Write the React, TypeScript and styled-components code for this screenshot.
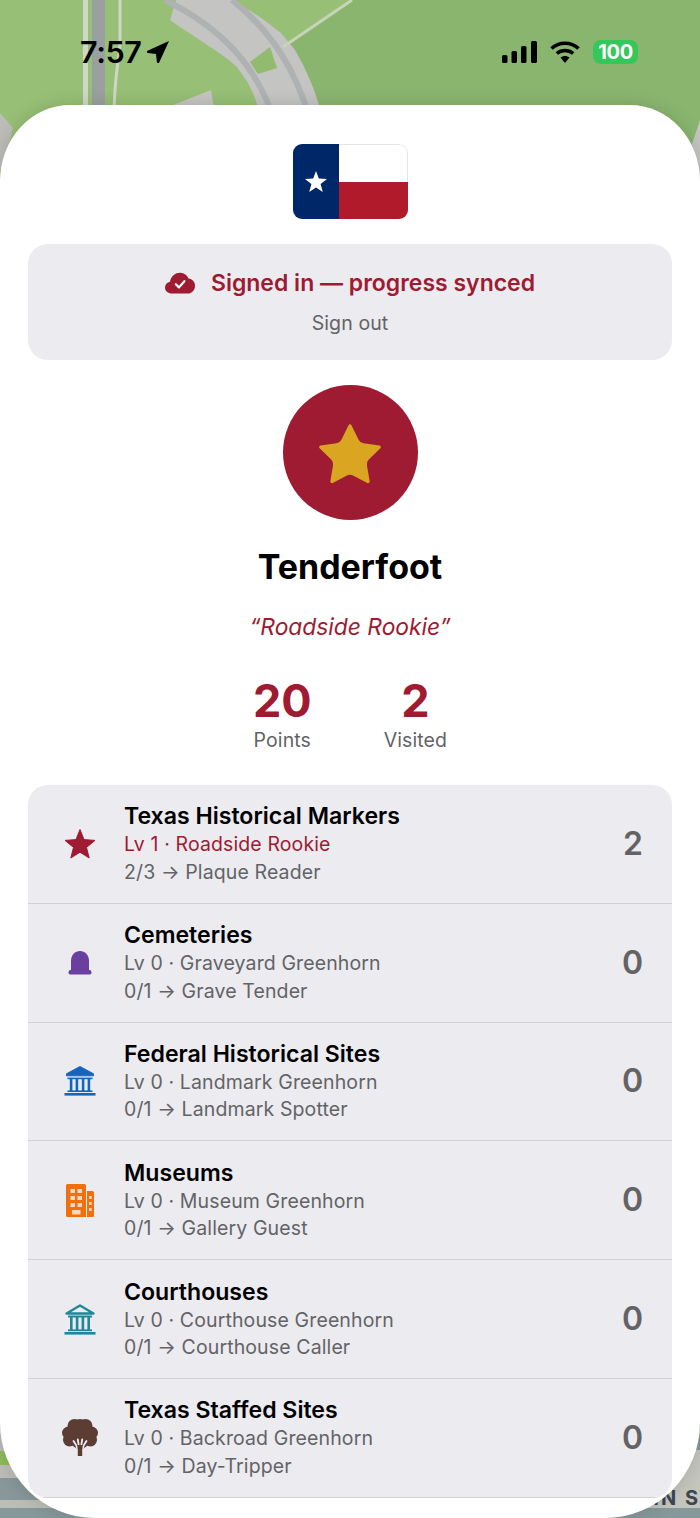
import React from "react";
import styled, { createGlobalStyle } from "styled-components";

const Global = createGlobalStyle`
  html, body { margin: 0; padding: 0; background: #8ab56f; }
  body { font-family: Inter, "Noto Sans", "Liberation Sans", sans-serif; -webkit-font-smoothing: antialiased; }
`;

const CRIMSON = "#9e1b32";
const GREY = "#636366";

const Screen = styled.div`
  position: relative;
  width: 700px;
  height: 1518px;
  overflow: hidden;
  display: flex;
  flex-direction: column;
`;
const MapArt = styled.svg`
  position: absolute;
  inset: 0;
  width: 700px;
  height: 1518px;
`;
const MapLabel = styled.span`
  position: absolute;
  right: 0;
  top: 1486px;
  font-size: 20px;
  font-weight: 700;
  letter-spacing: 2px;
  color: #3c4650;
  font-family: Inter, sans-serif;
`;
const StatusBar = styled.header`
  position: relative;
  height: 105px;
  flex: none;
  box-sizing: border-box;
  padding: 37px 62px 0 80px;
  display: flex;
  justify-content: space-between;
  align-items: flex-start;
`;
const TimeGroup = styled.div`
  display: flex;
  align-items: center;
  gap: 5px;
  height: 30px;
`;
const Time = styled.span`
  font-size: 30.5px;
  line-height: 30px;
  font-weight: 600;
  letter-spacing: -0.4px;
  color: #000;
`;
const Indicators = styled.div`
  display: flex;
  align-items: center;
  gap: 13px;
  height: 30px;
`;
const Battery = styled.span`
  width: 45px;
  height: 24px;
  border-radius: 8px;
  background: #34c759;
  color: #fff;
  font-size: 20px;
  font-weight: 700;
  line-height: 24px;
  text-align: center;
  letter-spacing: -0.3px;
`;
const Sheet = styled.main`
  position: relative;
  flex: 1;
  background: #fff;
  border-radius: 70px 70px 95px 95px / 76px 76px 95px 95px;
  box-shadow: 0 0 18px rgba(0, 0, 0, 0.14);
  padding: 39px 28px 0;
  overflow: hidden;
  display: flex;
  flex-direction: column;
  align-items: center;
  box-sizing: border-box;
`;
const Flag = styled.div`
  width: 115px;
  height: 75px;
  border-radius: 9px;
  overflow: hidden;
  display: flex;
  flex: none;
`;
const FlagHoist = styled.div`
  width: 46px;
  background: #002868;
  display: flex;
  align-items: center;
  justify-content: center;
`;
const FlagFly = styled.div`
  flex: 1;
  display: flex;
  flex-direction: column;
`;
const FlagWhite = styled.div`
  height: 38px;
  box-sizing: border-box;
  background: #fff;
  border: 1px solid #e4e4e6;
  border-left: none;
  border-bottom: none;
  border-radius: 0 9px 0 0;
`;
const FlagRed = styled.div`
  flex: 1;
  background: #b01a2b;
`;
const SyncCard = styled.section`
  align-self: stretch;
  height: 116px;
  margin-top: 25px;
  flex: none;
  border-radius: 20px;
  background: #ebebf0;
  display: flex;
  flex-direction: column;
  align-items: center;
  padding-top: 24px;
  box-sizing: border-box;
`;
const SyncLine = styled.div`
  display: flex;
  align-items: center;
  gap: 16px;
  height: 30px;
`;
const SyncText = styled.span`
  font-size: 23px;
  font-weight: 600;
  line-height: 30px;
  color: ${CRIMSON};
`;
const SignOut = styled.span`
  margin-top: 13px;
  font-size: 19.5px;
  line-height: 24px;
  letter-spacing: 0.1px;
  color: ${GREY};
`;
const Avatar = styled.div`
  width: 135px;
  height: 135px;
  flex: none;
  margin-top: 25px;
  border-radius: 50%;
  background: ${CRIMSON};
  display: flex;
  align-items: center;
  justify-content: center;
`;
const Rank = styled.h1`
  margin: 26px 0 0;
  font-size: 34px;
  line-height: 42px;
  font-weight: 700;
  color: #000;
`;
const Motto = styled.p`
  margin: 24px 0 0;
  font-size: 22.8px;
  line-height: 30px;
  font-style: italic;
  color: ${CRIMSON};
`;
const Stats = styled.div`
  margin-top: 32px;
  display: flex;
  gap: 72px;
  justify-content: center;
`;
const Stat = styled.div`
  display: flex;
  flex-direction: column;
  align-items: center;
`;
const StatValue = styled.span`
  font-size: 45px;
  line-height: 54px;
  font-weight: 700;
  color: ${CRIMSON};
`;
const StatLabel = styled.span`
  font-size: 19.5px;
  line-height: 24px;
  letter-spacing: 0.1px;
  color: ${GREY};
`;
const List = styled.section`
  align-self: stretch;
  margin-top: 33px;
  flex: none;
  border-radius: 20px;
  background: #ebebf0;
  overflow: hidden;
`;
const Row = styled.article`
  height: 118.8px;
  box-sizing: border-box;
  border-bottom: 1px solid #d1d1d6;
  display: flex;
  align-items: center;
  padding: 0 29px 0 0;
`;
const IconSlot = styled.div`
  width: 97px;
  flex: none;
  display: flex;
  justify-content: center;
  padding-left: 7px;
  box-sizing: border-box;
`;
const RowBody = styled.div`
  flex: 1;
  display: flex;
  flex-direction: column;
  margin-left: -1px;
`;
const RowName = styled.span`
  font-size: 23.1px;
  line-height: 30px;
  font-weight: 600;
  color: #000;
`;
const RowLine = styled.span<{ $accent?: boolean }>`
  font-size: 19.5px;
  line-height: 27.5px;
  letter-spacing: 0.12px;
  color: ${(p) => (p.$accent ? CRIMSON : GREY)};
`;
const RowCount = styled.span`
  font-size: 32px;
  font-weight: 600;
  line-height: 40px;
  color: ${GREY};
`;

const StarIcon = () => (
  <svg width="32" height="32" viewBox="0 0 32 32" aria-hidden>
    <polygon
      points="16,1.5 20,11.6 31,12.4 22.5,19.4 25.2,30 16,24.2 6.8,30 9.5,19.4 1,12.4 12,11.6"
      fill={CRIMSON}
      stroke={CRIMSON}
      strokeWidth="1"
      strokeLinejoin="round"
    />
  </svg>
);
const StoneIcon = () => (
  <svg width="24" height="25" viewBox="0 0 24 25" aria-hidden>
    <path d="M3 21V11C3 5 7 1 12 1s9 4 9 10v10z" fill="#6b3fa0" />
    <rect x="0.5" y="20" width="23" height="4.6" rx="2.2" fill="#6b3fa0" />
  </svg>
);
const BankFilled = () => (
  <svg width="32" height="30" viewBox="0 0 32 30" aria-hidden>
    <path d="M16 0.5 29.5 7.8v2h-27v-2z" fill="#1565c0" stroke="#1565c0" strokeLinejoin="round" />
    <g fill="#1565c0">
      <rect x="3.5" y="11.6" width="25" height="1.6" />
      <rect x="5.8" y="12.5" width="2.6" height="12.5" />
      <rect x="11.6" y="12.5" width="2.6" height="12.5" />
      <rect x="17.8" y="12.5" width="2.6" height="12.5" />
      <rect x="23.6" y="12.5" width="2.6" height="12.5" />
      <rect x="3.5" y="24.4" width="25" height="1.6" />
      <rect x="0.5" y="27" width="31" height="2.6" />
    </g>
  </svg>
);
const BankOutline = () => (
  <svg width="32" height="31" viewBox="0 0 32 31" aria-hidden>
    <path d="M16 1.5 29.5 9.5h-27z" fill="none" stroke="#1e8a98" strokeWidth="2.4" strokeLinejoin="round" />
    <g fill="#1e8a98">
      <rect x="4" y="11.5" width="24" height="2" />
      <rect x="6" y="13" width="2.6" height="13" />
      <rect x="11.8" y="13" width="2.6" height="13" />
      <rect x="17.6" y="13" width="2.6" height="13" />
      <rect x="23.4" y="13" width="2.6" height="13" />
      <rect x="4" y="25.4" width="24" height="1.8" />
      <rect x="0.5" y="28" width="31" height="2.6" />
    </g>
  </svg>
);
const BuildingIcon = () => (
  <svg width="28" height="33" viewBox="0 0 28 33" aria-hidden>
    <path d="M1.5 0h17A1.5 1.5 0 0 1 20 1.5V33H1.5A1.5 1.5 0 0 1 0 31.5v-30A1.5 1.5 0 0 1 1.5 0z" fill="#f26f0e" />
    <path d="M21 7h5.5A1.5 1.5 0 0 1 28 8.5v23a1.5 1.5 0 0 1-1.5 1.5H21z" fill="#f26f0e" />
    <g fill="#f7d9c0">
      <rect x="4.5" y="5" width="4.5" height="4" />
      <rect x="11.5" y="5" width="4.5" height="4" />
      <rect x="4.5" y="12" width="4.5" height="4" />
      <rect x="11.5" y="12" width="4.5" height="4" />
      <rect x="4.5" y="19" width="4.5" height="4" />
      <rect x="11.5" y="19" width="4.5" height="4" />
      <rect x="6" y="26" width="8.5" height="4.5" />
      <rect x="23" y="12" width="2.6" height="3" />
      <rect x="23" y="18" width="2.6" height="3" />
      <rect x="23" y="24" width="2.6" height="3" />
    </g>
  </svg>
);
const TreeIcon = () => (
  <svg width="36" height="37" viewBox="0 0 36 37" aria-hidden>
    <g fill="#5c3d33">
      <circle cx="12.5" cy="7" r="7" />
      <circle cx="23.5" cy="7" r="7" />
      <circle cx="18" cy="7" r="7" />
      <circle cx="6.5" cy="14" r="6.5" />
      <circle cx="29.5" cy="14" r="6.5" />
      <circle cx="7.5" cy="21" r="6.5" />
      <circle cx="28.5" cy="21" r="6.5" />
      <circle cx="18" cy="20" r="10" />
      <rect x="8" y="6" width="20" height="19" />
      <rect x="13" y="24" width="10" height="4" />
    </g>
    <g fill="none" stroke="#ebebf0" strokeWidth="1.8" strokeLinecap="round">
      <path d="M14.8 28.5C14.8 26 13 24.5 11.5 22" />
      <path d="M21.2 28.5C21.2 26 23 24.5 24.5 22" />
      <path d="M16.6 25.5 15.8 20.5" />
      <path d="M19.4 25.5 20.2 20.5" />
    </g>
    <path d="M15.8 26h4.4v11h-4.4z" fill="#5c3d33" />
  </svg>
);

const rows: { name: string; a: string; b: string; n: number; icon: React.ReactNode; accent?: boolean }[] = [
  { name: "Texas Historical Markers", a: "Lv 1 · Roadside Rookie", b: "2/3 → Plaque Reader", n: 2, icon: <StarIcon />, accent: true },
  { name: "Cemeteries", a: "Lv 0 · Graveyard Greenhorn", b: "0/1 → Grave Tender", n: 0, icon: <StoneIcon /> },
  { name: "Federal Historical Sites", a: "Lv 0 · Landmark Greenhorn", b: "0/1 → Landmark Spotter", n: 0, icon: <BankFilled /> },
  { name: "Museums", a: "Lv 0 · Museum Greenhorn", b: "0/1 → Gallery Guest", n: 0, icon: <BuildingIcon /> },
  { name: "Courthouses", a: "Lv 0 · Courthouse Greenhorn", b: "0/1 → Courthouse Caller", n: 0, icon: <BankOutline /> },
  { name: "Texas Staffed Sites", a: "Lv 0 · Backroad Greenhorn", b: "0/1 → Day-Tripper", n: 0, icon: <TreeIcon /> },
];

export default function App() {
  return (
    <Screen>
      <Global />
      <MapArt viewBox="0 0 700 1518" aria-hidden>
        <rect width="700" height="1518" fill="#8ab56f" />
        <path d="M0 0H352L283 47 300 105V170H0z" fill="#97bf75" />
        <path d="M176 0 170 20C195 38 218 50 237 67L248 83C256 98 260 110 264 140H330L319 105C312 82 304 66 295 50L281 33C265 20 250 10 232 0z" fill="#c4c4c2" />
        <path d="M250 62 270 47 277 68 258 74z" fill="#92bb70" />
        <path d="M173 105 211 90 216 120H173z" fill="#c4c4c2" />
        <path d="M165 0C215 25 255 60 274 120" fill="none" stroke="#aeb2b2" strokeWidth="6" />
        <path d="M232 0C272 32 296 70 310 120" fill="none" stroke="#aeb2b2" strokeWidth="6" />
        <path d="M283 47 352 0" fill="none" stroke="#c6d4b8" strokeWidth="3" />
        <rect x="92" y="0" width="13" height="120" fill="#9aa0a0" />
        <rect x="83" y="0" width="5" height="120" fill="#d0d6c8" />
        <path d="M120 0V40C120 60 114 70 114 120" fill="none" stroke="#d0d6c8" strokeWidth="3" />
        <path d="M0 113 13 128 3 170H0z" fill="#bcbcb8" />
        <path d="M700 120 690 150V190H700z" fill="#c4c4c2" />
        <rect y="1400" width="20" height="51" fill="#bcbcb8" />
        <rect y="1451" width="40" height="14" fill="#8fbb5e" />
        <rect y="1465" width="700" height="53" fill="#bcbeb6" />
        <rect y="1478" width="200" height="22" fill="#87979a" />
        <rect y="1500" width="200" height="8" fill="#bcbeb6" />
        <rect y="1508" width="700" height="10" fill="#87979a" />
        <rect x="560" y="1438" width="140" height="70" fill="#c4c5bd" />
        <rect x="660" y="1438" width="40" height="12" fill="#87979a" />
      </MapArt>
      <MapLabel>IN S</MapLabel>
      <StatusBar>
        <TimeGroup>
          <Time>7:57</Time>
          <svg width="24" height="24" viewBox="0 0 24 24" aria-hidden>
            <path d="M23 1 1.6 10.7c-1.1.5-.8 2.2.4 2.3L10 14l.9 8c.1 1.2 1.8 1.5 2.3.4z" fill="#000" />
          </svg>
        </TimeGroup>
        <Indicators>
          <svg width="35" height="22" viewBox="0 0 35 22" aria-hidden>
            <rect x="0" y="14" width="5.5" height="8" rx="1.6" fill="#000" />
            <rect x="9.5" y="10" width="5.5" height="12" rx="1.6" fill="#000" />
            <rect x="19" y="5" width="5.5" height="17" rx="1.6" fill="#000" />
            <rect x="29" y="0" width="6" height="22" rx="1.6" fill="#000" />
          </svg>
          <svg width="30" height="22" viewBox="0 0 30 22" aria-hidden>
            <path d="M1.5 7.5C9 .5 21 .5 28.5 7.5" fill="none" stroke="#000" strokeWidth="3.6" />
            <path d="M6.8 12.5C11.5 8.5 18.5 8.5 23.2 12.5" fill="none" stroke="#000" strokeWidth="3.6" />
            <path d="M10.5 16.6 15 22l4.5-5.4C17 14.5 13 14.5 10.5 16.6z" fill="#000" />
          </svg>
          <Battery>100</Battery>
        </Indicators>
      </StatusBar>
      <Sheet>
        <Flag>
          <FlagHoist>
            <svg width="24" height="24" viewBox="0 0 24 24" aria-hidden>
              <polygon points="12,1 14.8,8.6 23,9 16.6,14 18.8,22 12,17.5 5.2,22 7.4,14 1,9 9.2,8.6" fill="#fff" />
            </svg>
          </FlagHoist>
          <FlagFly>
            <FlagWhite />
            <FlagRed />
          </FlagFly>
        </Flag>
        <SyncCard>
          <SyncLine>
            <svg width="30" height="22" viewBox="0 0 30 22" aria-hidden>
              <path
                d="M7 21.5C3 21.5 0 19 0 15.5c0-3 2-5.3 5-5.8C6 4 10.5 0.5 15.5 0.8c3.7.2 6.7 2.4 8 5.6 3.7.5 6.5 3.3 6.5 7.3 0 4.6-3.2 7.8-7.5 7.8z"
                fill={CRIMSON}
              />
              <path d="M10.8 12.2 14 15.4 19.4 9.2" fill="none" stroke="#fff" strokeWidth="2.2" strokeLinecap="round" strokeLinejoin="round" />
            </svg>
            <SyncText>Signed in — progress synced</SyncText>
          </SyncLine>
          <SignOut>Sign out</SignOut>
        </SyncCard>
        <Avatar>
          <svg width="74" height="74" viewBox="0 -0.7 24 24" aria-hidden>
            <path
              d="M11.525 2.295a.53.53 0 0 1 .95 0l2.31 4.679a2.123 2.123 0 0 0 1.595 1.16l5.166.756a.53.53 0 0 1 .294.904l-3.736 3.638a2.123 2.123 0 0 0-.611 1.878l.882 5.14a.53.53 0 0 1-.771.56l-4.618-2.428a2.122 2.122 0 0 0-1.973 0L6.396 21.01a.53.53 0 0 1-.77-.56l.881-5.139a2.122 2.122 0 0 0-.611-1.879L2.16 9.795a.53.53 0 0 1 .294-.906l5.165-.755a2.122 2.122 0 0 0 1.597-1.16z"
              fill="#daa520"
            />
          </svg>
        </Avatar>
        <Rank>Tenderfoot</Rank>
        <Motto>“Roadside Rookie”</Motto>
        <Stats>
          <Stat>
            <StatValue>20</StatValue>
            <StatLabel>Points</StatLabel>
          </Stat>
          <Stat>
            <StatValue>2</StatValue>
            <StatLabel>Visited</StatLabel>
          </Stat>
        </Stats>
        <List>
          {rows.map((r) => (
            <Row key={r.name}>
              <IconSlot>{r.icon}</IconSlot>
              <RowBody>
                <RowName>{r.name}</RowName>
                <RowLine $accent={r.accent}>{r.a}</RowLine>
                <RowLine>{r.b}</RowLine>
              </RowBody>
              <RowCount>{r.n}</RowCount>
            </Row>
          ))}
        </List>
      </Sheet>
    </Screen>
  );
}
